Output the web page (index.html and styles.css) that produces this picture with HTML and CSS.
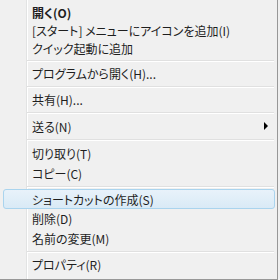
FILE: index.html
```html
<!DOCTYPE html>
<html lang="ja">
<head>
<meta charset="utf-8">
<link rel="stylesheet" href="styles.css">
</head>
<body>
<div class="menu">
  <div class="item compact bold">開く(O)</div>
  <div class="item compact">[スタート] メニューにアイコンを追加(I)</div>
  <div class="item compact">クイック起動に追加</div>
  <div class="sep"></div>
  <div class="item">プログラムから開く(H)...</div>
  <div class="sep"></div>
  <div class="item">共有(H)...</div>
  <div class="sep wide"></div>
  <div class="item sub">送る(N)<span class="arrow"></span></div>
  <div class="sep wide"></div>
  <div class="item">切り取り(T)</div>
  <div class="item">コピー(C)</div>
  <div class="sep"></div>
  <div class="item hover">ショートカットの作成(S)</div>
  <div class="item compact19">削除(D)</div>
  <div class="item">名前の変更(M)</div>
  <div class="sep"></div>
  <div class="item">プロパティ(R)</div>
</div>
</body>
</html>
```
FILE: styles.css
```css
html, body {
  margin: 0;
  padding: 0;
  background: #f0f0f0;
}
.menu {
  width: 277px;
  height: 276px;
  border-right: 1px solid #979797;
  border-bottom: 1px solid #979797;
  background: #f0f0f0 linear-gradient(to right, transparent 26px, #e2e3e3 26px, #e2e3e3 27px, #ffffff 27px, #ffffff 28px, transparent 28px);
  display: flex;
  flex-direction: column;
  padding-top: 3px;
  font-family: "Noto Sans CJK JP", sans-serif;
  font-size: 12px;
  font-feature-settings: "palt";
  color: #1e1e1e;
}
.item {
  flex: none;
  height: 20px;
  display: flex;
  align-items: center;
  position: relative;
  margin: 0 2px 0 3px;
  padding-left: 28px;
  border: 1px solid transparent;
  border-radius: 3px;
  box-sizing: border-box;
}
.compact { height: 18px; }
.compact19 { height: 19px; }
.bold { font-weight: bold; }
.sep {
  flex: none;
  height: 6px;
  margin-left: 27px;
  margin-right: 3px;
  display: flex;
  align-items: center;
}
.sep.wide { height: 7px; }
.sep::before {
  content: "";
  flex: 1;
  height: 1px;
  background: #e0e0e0;
  box-shadow: 0 1px 0 #ffffff;
}
.hover {
  border-color: #aad4ee;
  background: linear-gradient(#e8f2fa, #d9eaf6);
}
.arrow {
  position: absolute;
  right: 6px;
  top: 5px;
  width: 0;
  height: 0;
  border-top: 4px solid transparent;
  border-bottom: 4px solid transparent;
  border-left: 4px solid #000;
}
```
